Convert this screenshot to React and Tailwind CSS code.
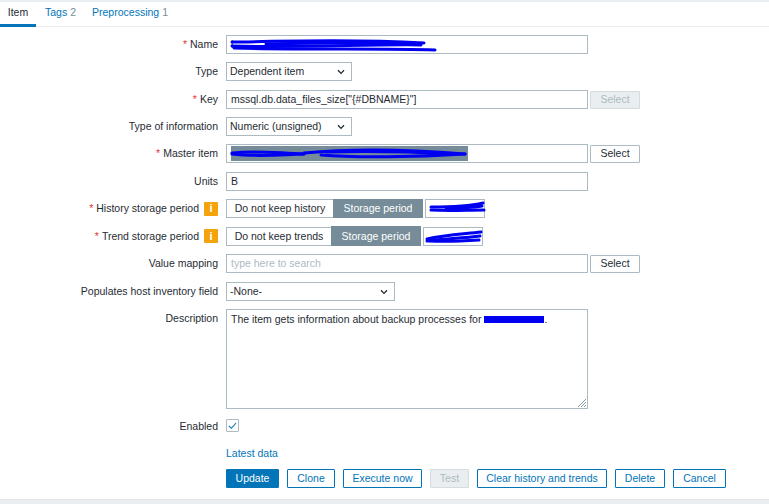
const border = "border border-[#acbbc2]";
const font = { fontFamily: '"Liberation Sans", Arial, sans-serif' };

function Label({ req, children, info }) {
  return (
    <div className="w-[218px] shrink-0 flex justify-end items-center text-[#1f2c33] gap-[5px]">
      <span className="whitespace-nowrap">
        {req && <span className="text-[#e33734] mr-[3px]">*</span>}
        {children}
      </span>
      {info && (
        <span className="w-[14px] h-[14px] bg-[#f4a30d] text-white text-[11px] font-bold flex items-center justify-center rounded-[1px]">i</span>
      )}
    </div>
  );
}

function Row({ className, label, req, info, children }) {
  return (
    <div className={"flex items-center gap-[8px] " + className}>
      <Label req={req} info={info}>{label}</Label>
      <div className="flex items-center relative">{children}</div>
    </div>
  );
}

function Text({ w = "w-[362px]", h = "h-[19px]", children, className = "" }) {
  return (
    <div className={`${w} ${h} ${border} bg-white flex items-center pl-[4px] overflow-hidden whitespace-nowrap ${className}`}>{children}</div>
  );
}

function Sel({ w, children }) {
  return (
    <div className={`${w} h-[19px] ${border} bg-white flex items-center justify-between pl-[3px] pr-[6px] whitespace-nowrap`}>
      <span>{children}</span>
      <svg width="8" height="6" viewBox="0 0 8 6" fill="none" stroke="#1f2c33" strokeWidth="1.3"><path d="M1 1.2 4 4.4 7 1.2" /></svg>
    </div>
  );
}

function Pick({ disabled }) {
  return (
    <div className={`ml-[2px] w-[50px] h-[18px] flex items-center justify-center rounded-[1px] border ${disabled ? "bg-[#ebeef0] border-[#d5dce0] text-[#acbbc2]" : "bg-white border-[#acbbc2] text-[#1f2c33]"}`}>Select</div>
  );
}

function Scribble({ className, d, w, h, sw = 3 }) {
  return (
    <svg className={"absolute pointer-events-none " + className} width={w} height={h} viewBox={`0 0 ${w} ${h}`} fill="none" stroke="#0000f0" strokeWidth={sw} strokeLinecap="round">
      {d.map((p, i) => <path key={i} d={p} />)}
    </svg>
  );
}

function Seg({ left, l, r, tall, d }) {
  return (
    <div className="flex items-center">
      <div className={`${l} h-[19px] ${border} border-r-0 bg-white flex items-center justify-center whitespace-nowrap`}>{left}</div>
      <div className={`${r} ${tall ? "h-[20px]" : "h-[19px]"} bg-[#768d99] text-white flex items-center justify-center whitespace-nowrap`}>Storage period</div>
      <div className={`ml-[2px] w-[60px] h-[19px] ${border} bg-white relative`}>
        <Scribble className="left-0 top-0" w={60} h={19} d={d} />
      </div>
    </div>
  );
}

function Btn({ primary, disabled, w, children }) {
  const c = primary
    ? "bg-[#0275b8] border-[#0275b8] text-white"
    : disabled
    ? "bg-[#ebeef0] border-[#d5dce0] text-[#acbbc2]"
    : "bg-white border-[#0275b8] text-[#0275b8]";
  return <div className={`${w} h-[19px] border rounded-[1px] flex items-center justify-center whitespace-nowrap ${c}`}>{children}</div>;
}

export default function App() {
  return (
    <div style={font} className="w-[769px] h-[504px] bg-white text-[10.5px] leading-none text-[#1f2c33] overflow-hidden flex flex-col">
      <div className="h-[2px] bg-[#ebeef0] shrink-0" />
      <div className="h-[25px] flex border-b border-[#ebeef0] shrink-0 text-[#0275b8]">
        <div className="w-[36px] border-b-[3px] border-[#0275b8] -mb-px flex items-center justify-center text-[#1f2c33] pb-px">Item</div>
        <div className="ml-[9px] flex items-center pb-[3px]">Tags<span className="ml-[3px] text-[#768d99]">2</span></div>
        <div className="ml-[16px] flex items-center pb-[3px]">Preprocessing<span className="ml-[3px] text-[#768d99]">1</span></div>
      </div>

      <Row className="mt-[8px]" label="Name" req>
        <Text>
          <span className="text-[#1f2c33]">l</span>
        </Text>
        <Scribble className="left-0 top-0" w={215} h={19} sw={3} d={[
          "M6 7C50 7 110 3 198 8",
          "M6 11C70 13 150 9 195 10",
          "M8 13C80 15 160 13 209 15",
          "M40 9C90 8 140 7 190 9",
        ]} />
      </Row>
      <Row className="mt-[8px]" label="Type"><Sel w="w-[126px]">Dependent item</Sel></Row>
      <Row className="mt-[9px]" label="Key" req>
        <Text>{'mssql.db.data_files_size["{#DBNAME}"]'}</Text>
        <Pick disabled />
      </Row>
      <Row className="mt-[8px]" label="Type of information"><Sel w="w-[126px]">Numeric (unsigned)</Sel></Row>
      <Row className="mt-[8px]" label="Master item" req>
        <Text className="pl-[1px]">
          <div className="w-[237px] h-[15px] bg-[#768d99]" />
        </Text>
        <Scribble className="left-0 top-0" w={242} h={19} sw={3} d={[
          "M6 9C30 6 50 9 78 10",
          "M6 10C30 13 50 11 78 10",
          "M78 9C130 4 190 6 239 10",
          "M95 11C130 14 190 13 239 10",
          "M100 8C140 7 190 8 225 10",
        ]} />
        <Pick />
      </Row>
      <Row className="mt-[9px]" label="Units"><Text>B</Text></Row>
      <Row className="mt-[8px]" label="History storage period" req info>
        <Seg left="Do not keep history" l="w-[107px]" r="w-[90px]"
          d={["M5 7C20 7 40 7 57 3", "M5 10C25 11 40 10 58 10", "M20 8C30 8 45 8 56 6"]} />
      </Row>
      <Row className="mt-[8px]" label="Trend storage period" req info>
        <Seg tall left="Do not keep trends" l="w-[105px]" r="w-[90px]"
          d={["M3 11C20 7 40 6 57 4", "M3 13C20 11 40 10 56 8", "M6 13C25 14 40 13 55 12"]} />
      </Row>
      <Row className="mt-[8px]" label="Value mapping">
        <Text className="text-[#acbbc2]">type here to search</Text>
        <Pick />
      </Row>
      <Row className="mt-[9px]" label="Populates host inventory field"><Sel w="w-[169px]">-None-</Sel></Row>

      <div className="flex gap-[8px] mt-[8px]">
        <div className="w-[218px] text-right pt-[4px]">Description</div>
        <div className={`w-[362px] h-[100px] ${border} bg-white pl-[4px] pt-[4px] relative whitespace-nowrap`}>
          The item gets information about backup processes for
          <span className="inline-block w-[60px] h-[7px] bg-[#0000f0] ml-[3px]" />.
          <svg className="absolute right-0 bottom-0" width="10" height="10" viewBox="0 0 10 10" stroke="#8a9aa2" strokeWidth="1">
            <path d="M1 9 9 1M4 9 9 4M7 9 9 7" />
          </svg>
        </div>
      </div>

      <div className="flex items-center gap-[8px] mt-[10px]">
        <div className="w-[218px] text-right pt-[1px]">Enabled</div>
        <div className={`w-[13px] h-[13px] ${border} rounded-[1px] bg-white flex items-center justify-center`}>
          <svg width="9" height="8" viewBox="0 0 9 8" fill="none" stroke="#0275b8" strokeWidth="1.1"><path d="M1 4 3.4 6.3 8 1" /></svg>
        </div>
      </div>

      <div className="ml-[226px] mt-[16px] text-[#0275b8]">Latest data</div>

      <div className="ml-[226px] mt-[10px] flex gap-[8px]">
        <Btn primary w="w-[53px]">Update</Btn>
        <Btn w="w-[48px]">Clone</Btn>
        <Btn w="w-[79px]">Execute now</Btn>
        <Btn disabled w="w-[39px]">Test</Btn>
        <Btn w="w-[130px]">Clear history and trends</Btn>
        <Btn w="w-[50px]">Delete</Btn>
        <Btn w="w-[53px]">Cancel</Btn>
      </div>

      <div className="mt-auto h-[5px] bg-[#ebeef0] border-t border-[#e2e6e9] shrink-0" />
    </div>
  );
}
